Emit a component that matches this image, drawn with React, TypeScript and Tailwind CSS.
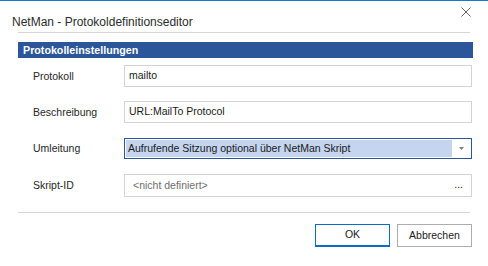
import React from "react";

const font = { fontFamily: '"Liberation Sans", Arial, sans-serif' };

function Row({
  label,
  mt,
  h,
  children,
}: {
  label: string;
  mt: string;
  h: string;
  children: React.ReactNode;
}) {
  return (
    <div className={`flex items-center ${mt}`}>
      <div className="w-[106px] pl-[15px] text-[10.5px] text-[#262626] leading-[13px]">
        {label}
      </div>
      <div className={`w-[348px] ${h}`}>{children}</div>
    </div>
  );
}

export default function App() {
  return (
    <div
      className="w-[488px] h-[266px] bg-white border-t border-[#1979ca] flex flex-col"
      style={font}
    >
      {/* Titelzeile */}
      <div className="h-[31px] flex justify-between">
        <div className="pl-[12px] pt-[14px] text-[12px] leading-[14px] text-[#2b2b2b]">
          NetMan - Protokoldefinitionseditor
        </div>
        <div className="mt-[6px] mr-[17px]">
          <svg width="10" height="10" viewBox="0 0 10 10">
            <path d="M0.5 0.5 L9.5 9.5 M9.5 0.5 L0.5 9.5" stroke="#666" strokeWidth="1" />
          </svg>
        </div>
      </div>
      <div className="ml-[18px] w-[452px] h-px bg-[#d6d6d6]" />

      {/* Gruppe */}
      <div className="ml-[18px] mt-[9px] w-[455px] h-[16px] bg-[#2b579a] pl-[5px] text-[10.7px] font-bold leading-[16px] text-white">
        Protokolleinstellungen
      </div>

      <div className="ml-[18px] flex flex-col">
        <Row label="Protokoll" mt="mt-[7px]" h="h-[22px]">
          <div className="h-full border border-[#d4d4d4] pl-[4px] flex items-center text-[10.5px] text-[#1a1a1a]">
            mailto
          </div>
        </Row>
        <Row label="Beschreibung" mt="mt-[14px]" h="h-[22px]">
          <div className="h-full border border-[#d4d4d4] pl-[4px] flex items-center text-[10.5px] text-[#1a1a1a]">
            URL:MailTo Protocol
          </div>
        </Row>
        <Row label="Umleitung" mt="mt-[15px]" h="h-[21px]">
          <div className="h-full border border-[#2b579a] p-[1px] flex">
            <div className="flex-1 bg-[#c5d5ef] pl-[2px] flex items-center text-[10.5px] text-[#1a1a1a]">
              Aufrufende Sitzung optional über NetMan Skript
            </div>
            <div className="w-[18px] flex items-center justify-center">
              <svg width="5" height="3" viewBox="0 0 5 3">
                <path d="M0 0 H5 L2.5 3 Z" fill="#808080" />
              </svg>
            </div>
          </div>
        </Row>
        <Row label="Skript-ID" mt="mt-[15px]" h="h-[23px]">
          <div className="h-full border border-[#d4d4d4] pl-[8px] pr-[8px] flex items-center justify-between text-[10.5px]">
            <span className="text-[#6e6e6e]">&lt;nicht definiert&gt;</span>
            <span className="text-[#222] leading-none pb-[3px]">...</span>
          </div>
        </Row>
      </div>

      <div className="ml-[18px] mt-[15px] w-[452px] h-px bg-[#d6d6d6]" />

      {/* Schaltflächen */}
      <div className="mt-[11px] mr-[16px] flex justify-end gap-[7px]">
        <button className="w-[75px] h-[23px] bg-white border border-b-2 border-[#0a6ccb] text-[10.5px] text-[#1a1a1a]">
          OK
        </button>
        <button className="w-[75px] h-[23px] bg-white border border-[#adadad] text-[10.5px] text-[#1a1a1a]">
          Abbrechen
        </button>
      </div>
    </div>
  );
}
